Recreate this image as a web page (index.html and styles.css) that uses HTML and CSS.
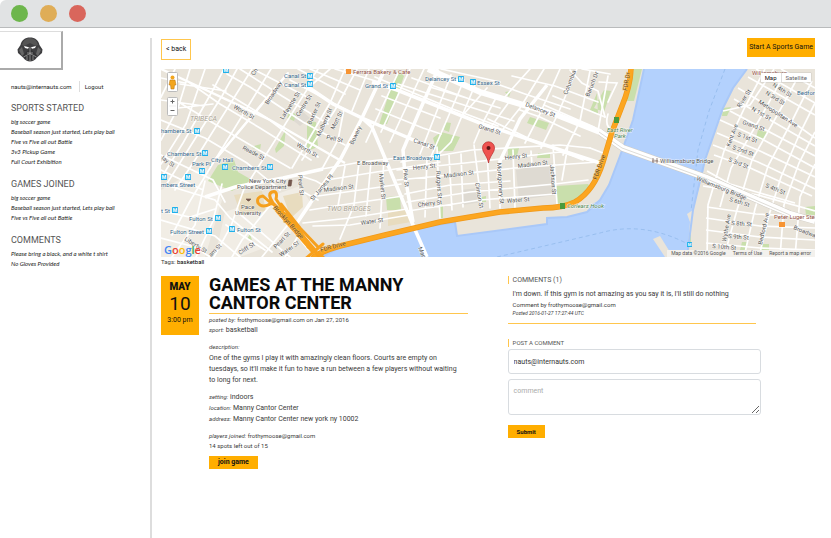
FILE: index.html
```html
<!DOCTYPE html>
<html lang="en">
<head>
<meta charset="utf-8">
<title>Games at the Manny Cantor Center</title>
<link rel="stylesheet" href="styles.css">
</head>
<body>
<header class="chrome"><span class="dot green"></span><span class="dot amber"></span><span class="dot red"></span></header>
<div class="shell">
  <aside class="sidebar">
    <a class="logo" href="#" aria-label="Home">
      <svg viewBox="0 0 28 28" width="28" height="28">
        <path d="M14 1.500C19 1.500 22.500 4 23.500 9L26.500 13.500L26 17L21 21.500Q18 25.500 14 25.500Q10 25.500 7 21.500L2 17L1.500 13.500L4.500 9C5.500 4 9 1.500 14 1.500Z" fill="#3e3e40"/>
        <path d="M14 2Q7 3 6 9L8 10L14 7L20 10L22 9Q21 3 14 2Z" fill="#555"/>
        <path d="M3 14L6 11L8 18L6 20ZM25 14L22 11L20 18L22 20Z" fill="#666"/>
        <path d="M8 10L13 11.200L12 12.800L9 12ZM20 10L15 11.200L16 12.800L19 12Z" fill="#fff"/>
        <path d="M14 13L10 16L7 20L11 24H17L21 20L18 16Z" fill="#333335"/>
        <path d="M14 11V25.500M11 17H17M7.500 21L14 17.500L20.500 21M11 20V24M17 20V24" fill="none" stroke="#aaa" stroke-width=".7"/>
      </svg>
    </a>
    <div class="account"><span class="email">nauts@internauts.com</span><a href="#">Logout</a></div>
    <section class="group"><h2>SPORTS STARTED</h2>
      <ul><li>big soccer game</li><li>Baseball season just started, Lets play ball</li><li>Five vs Five all out Battle</li><li>3v3 Pickup Game</li><li>Full Court Exhibition</li></ul></section>
    <section class="group"><h2>GAMES JOINED</h2>
      <ul><li>big soccer game</li><li>Baseball season just started, Lets play ball</li><li>Five vs Five all out Battle</li></ul></section>
    <section class="group"><h2>COMMENTS</h2>
      <ul><li>Please bring a black, and a white t shirt</li><li>No Gloves Provided</li></ul></section>
  </aside>
  <main class="main">
    <nav class="toolbar"><a class="back" href="#">&lt; back</a><button class="start" type="button">Start A Sports Game</button></nav>
    <div class="map">
      <svg class="map-art" viewBox="161 69 654 188" preserveAspectRatio="xMidYMid slice">
        <defs>
          <symbol id="metro" viewBox="0 0 6 6"><rect width="6" height="6" rx=".6" fill="#1fb0ea"/><text x="3" y="4.900" text-anchor="middle" class="metro-m">M</text></symbol>
        </defs>
        <rect x="161" y="69" width="654" height="188" fill="#e9e4da"/>
        <g fill="#f1ede5">
          <path d="M161 190L205 165L222 200L205 257H161ZM225 212L300 186L312 205L285 240L240 257H215Z"/>
        </g>
        <g fill="#dedad2">
          <path d="M516 170L553 163L555 195L519 200ZM290 118L302 111L310 118L300 126ZM461 190L478 188L482 202L462 205Z"/>
        </g>
        <g fill="#e8dcbf"><path d="M283 196L302 192L303 207L291 218ZM234 195L262 191L266 211L241 215ZM388 211L408 208L411 222L388 226Z"/></g>
        <g fill="#c9dfac">
          <path d="M208 181L218 165L234 160L238 172L252 180L232 191ZM275 149L286 129L284 146L276 153ZM307 121L316 122L318 147L307 151ZM289 112L296 114L294 121L287 118ZM254 146L261 144L260 150L252 148Z"/>
          <path d="M392 84L400 72L404 76L387 124L379 125ZM441 132L460 137L453 151H437L433 138ZM445 122L451 123L449 132L444 130ZM530 117L549 123L546 130L527 123ZM508 148L519 148L517 156L508 156ZM538 153L550 153L550 158H537ZM505 92L511 91L509 97Z"/>
          <path d="M556 186L588 184L591 188L579 202L557 204ZM604 90L611 91L604 112L594 108ZM597 93L590 110L598 114ZM634 69H642L634 101H627ZM723 108L731 107L727 116H722ZM758 130L767 132L764 141L756 138ZM386 197L400 196L401 210H387ZM481 197L486 196V202H481ZM439 205L443 205V218H440ZM250 234L252 240L247 239ZM805 207L815 206V215H806ZM742 242L747 242L745 250H740ZM762 244H769V253H760ZM691 231V245H688Z"/>
        </g>
        <g fill="none" stroke="#fff" stroke-width="1.700" stroke-linecap="round">
          <path d="M175 69L161 97M190 69L178 108L161 140M205 69L186 124L161 164M224 69L214 88L183 143L161 178M237 69L222 96L188 150L166 185M252 69L195 160L175 190M271 69L215 160L190 201L172 235M330 69L308 88L250 180M345 69L330 103L292 168M357 69L335 110L302 160M369 69L352 111M318 69L305 88M288 73L215 160"/>
          <path d="M161 78L185 83M161 100L204 106M180 84L226 91M178 108L213 104M161 120L205 138L247 163L280 190M172 98L208 120L252 146L290 168M190 83L220 104L260 128L311 160M213 85L267 118L318 157M227 74L250 87L303 122L345 145M240 69L282 96L328 124M253 69L280 83L307 97M290 80L335 104L361 118M298 69L345 94M310 69L360 90M335 69L379 82"/>
          <path d="M161 155L213 180L225 202M161 170L203 190M161 211L190 217L215 209M166 185L215 200L230 218L272 252M161 220L215 236L240 257M161 238L195 247L210 257M205 181L195 225L172 257M222 184L213 221L196 257M245 186L231 226L214 257M272 203L242 240L232 257M290 222L262 257M281 218L302 230L285 257M241 215L290 257M226 225L265 250"/>
          <path d="M344 109L338 140L322 169M322 169L361 162L398 158M327 180L370 173L440 162M318 196L360 190L401 184M310 210L348 204L403 196M303 223L350 218L407 209M345 166L338 206M359 162L354 205L340 239M371 162L366 216M384 158L380 228M313 226L350 225L409 215M298 175L316 181L328 188M300 190L318 200"/>
          <path d="M398 73L366 142M410 69L381 132M424 69L390 142M451 75L420 154M464 80L430 159M475 85L451 142L438 155M487 88L462 116M497 96L482 124L474 143M509 102L490 128M544 69L520 108L500 133M560 69L539 116L525 143M577 69L557 116L541 148M590 71L580 121L563 155M530 69L504 98M608 76L598 131M520 110L540 117L580 136M488 119L530 139L583 160"/>
          <path d="M375 77L450 108L498 126M382 96L440 118M376 109L423 128L441 134M398 84L467 106L514 121M412 78L475 101M430 87L500 108M494 83L525 94L570 109M512 76L555 86L598 102M441 69L500 82M544 105L594 127M553 96L605 117"/>
          <path d="M401 162L472 150L560 145L590 148M397 170L465 163L560 152L595 162M397 180L440 176L515 168L598 162M405 194L450 185L510 181M407 202L470 192L555 184L588 180M408 211L480 200L555 194M437 147L440 218M427 158L425 217M449 155L452 210M461 154L463 207M474 145L482 208M487 151L490 208M513 150L515 208M531 151L532 165M553 145L557 204M568 145L562 180M500 160V208"/>
          <path d="M570 70L582 83L598 91L605 117M582 69L610 74M599 82L617 83L608 102M608 114Q604 127 613 130M590 148L603 153"/>
        </g>
        <path d="M644 69L638 97L633 120L620 156L609 185L600 200L592 204L587 212L567 217L547 218V224L457 236L455 222L413 229L370 240L342 246L322 257H653L665 257L653 239L660 236L673 257H687L690 222L687 214L693 210L703 173L705 160L715 130L723 108L733 88L747 69Z" fill="#b3d1fd"/>
        <path d="M644 69L638 97L633 120L620 156L609 185L600 200L587 212L567 217L547 218V224L457 236L455 222L413 229L370 240L342 246L322 257M747 69L733 88L723 108L705 160L693 210L687 257" fill="none" stroke="#a9c8f8" stroke-width="2"/>
        <path d="M725 69L709 111L698 150L691 211M497 257L600 233Q642 221 686 243" fill="none" stroke="#8db6e8" stroke-dasharray="4 3" stroke-width=".7"/>
        <g fill="none" stroke="#fff" stroke-width="1.700">
          <path d="M774 69L750 105L723 111M765 69L745 107L724 151L708 205L707 257M785 73L762 115L731 168L720 207M798 77L779 112L752 160L737 210L724 257M812 81L793 119L768 166L755 209L744 257M815 103L800 133L781 177L769 215L759 257M815 132L799 163L784 205L780 257M815 164L800 197L795 257"/>
          <path d="M748 77L815 115M756 69L815 103M781 69L815 88M738 88L783 115L815 138M734 99L815 146M730 111L815 156M720 120L762 139L815 168M717 133L760 151L815 177M713 145L758 162L815 189M714 155L748 167L812 196M707 171L730 184L760 193L795 203M703 186L758 195L815 211M707 207L756 214L815 217M706 218L760 226L815 228M706 230L760 237L815 240M706 243L760 248L815 250"/>
        </g>
        <path d="M600 132L623 148L707 178L790 214L815 221" fill="none" stroke="#d0ccc4" stroke-width="7"/>
        <g fill="none" stroke="#fff">
          <path stroke-width="6" d="M428 69L480 92L557 115L600 132L623 148L707 178L790 214L815 221"/>
          <path stroke-width="3.500" d="M372 82L397 90L480 123L545 145L600 163M308 87L333 104L362 118L430 147M385 69L362 118L340 160L311 202L297 223M362 118L372 127L390 170L413 225L427 257M438 69L420 110L403 150L405 176L413 222M547 85L520 119L500 161L498 180M205 197L235 187L283 178L323 169"/>
          <path stroke-width="2.400" d="M161 69L176 76L270 120L345 163M288 73L215 160M271 203L309 250M287 213L320 257"/>
        </g>
        <path d="M599 132L622 148L707 179L790 215" fill="none" stroke="#d6d3cd" stroke-width=".8"/>
        <g fill="none" stroke-linecap="round" stroke-linejoin="round">
          <path d="M631 69Q630 87 622 106L612 132L603 162Q594 191 575 202Q563 208 543 208L500 212L440 222L385 235L340 246Q322 251 314 257" stroke="#f0991a" stroke-width="5.600"/>
          <path d="M631 69Q630 87 622 106L612 132L603 162Q594 191 575 202Q563 208 543 208L500 212L440 222L385 235L340 246Q322 251 314 257" stroke="#fca620" stroke-width="4.200"/>
          <path d="M272 204L263 196Q256 197 258 203Q262 209 272 203L286 215L312 247L319 257M283 210L276 199Q278 190 272 192Q267 194 273 203L285 215M281 204L300 228L318 247" stroke="#f5a01e" stroke-width="3"/>
          <path d="M278 210L313 250" stroke="#f9a11c" stroke-width="6"/>
          <path d="M308 247L323 257M323 244L304 260" stroke="#f9a11c" stroke-width="3"/>
        </g>
        <g fill="#4a9a3c"><rect x="614" y="117" width="5" height="6"/><rect x="560" y="203" width="5" height="6"/></g>
        <g>
          <use href="#metro" x="307" y="73" width="6" height="6"/><use href="#metro" x="307" y="81" width="6" height="6"/><use href="#metro" x="390" y="83" width="6" height="6"/><use href="#metro" x="458" y="76" width="6" height="6"/><use href="#metro" x="470" y="79" width="6" height="6"/><use href="#metro" x="434" y="154" width="6" height="6"/><use href="#metro" x="194" y="128" width="6" height="6"/><use href="#metro" x="202" y="150" width="6" height="6"/><use href="#metro" x="222" y="164" width="6" height="6"/><use href="#metro" x="199" y="168" width="6" height="6"/><use href="#metro" x="267" y="164" width="6" height="6"/><use href="#metro" x="185" y="174" width="6" height="6"/><use href="#metro" x="161" y="174" width="6" height="6"/><use href="#metro" x="172" y="207" width="6" height="6"/><use href="#metro" x="215" y="215" width="6" height="6"/><use href="#metro" x="206" y="228" width="6" height="6"/><use href="#metro" x="229" y="226" width="6" height="6"/><use href="#metro" x="223" y="67" width="6" height="6"/><use href="#metro" x="687" y="242" width="5" height="5"/>
        </g>
        <g class="road">
          <text transform="translate(233 108) rotate(30)">Worth St</text><text transform="translate(296 146) rotate(30)">Worth St</text><text transform="translate(268 105) rotate(-57)">Broadway</text><text transform="translate(283 120) rotate(-57)">Lafayette St</text><text transform="translate(299 117) rotate(-58)">Centre St</text><text transform="translate(311 125) rotate(-66)">Baxter St</text><text transform="translate(320 137) rotate(-66)">Mulberry St</text><text transform="translate(334 130) rotate(-63)">Mott St</text><text transform="translate(326 139) rotate(12)">Pell St</text><text transform="translate(353 145) rotate(-64)">Bowery</text><text transform="translate(242 149) rotate(28)">Reade St</text><text transform="translate(254 76) rotate(-55)">Ch</text>
          <text transform="translate(313 201) rotate(-50)">St James Pl</text><text transform="translate(298 175) rotate(85)">Pearl St</text><text transform="translate(324 192) rotate(-7)">Madison St</text><text x="357" y="165">E Broadway</text><text transform="translate(379 174) rotate(84)">Market St</text><text transform="translate(403 169) rotate(84)">Pike St</text><text transform="translate(361 225) rotate(-8)">Water St</text><text transform="translate(276 249) rotate(-46)">Pearl St</text><text transform="translate(281 257) rotate(-35)">Water St</text><text transform="translate(184 240) rotate(32)">Liberty St</text><text transform="translate(240 255) rotate(-33)">Cliff St</text><text transform="translate(211 257) rotate(-45)">am St</text><text transform="translate(161 159) rotate(35)">lay St</text>
          <text transform="translate(413 142) rotate(20)">Canal St</text><text transform="translate(478 128) rotate(17)">Grand St</text><text transform="translate(525 106) rotate(21)">Delancey St</text><text transform="translate(413 170) rotate(-6)">Henry St</text><text transform="translate(505 160) rotate(-7)">Henry St</text><text transform="translate(444 178) rotate(-7)">Madison St</text><text transform="translate(518 168) rotate(-7)">Madison St</text><text transform="translate(418 207) rotate(-7)">Cherry St</text><text transform="translate(507 203) rotate(-5)">Water St</text><text transform="translate(436 171) rotate(86)">Rutgers St</text><text transform="translate(475 183) rotate(80)">Clinton St</text><text transform="translate(497 163) rotate(86)">Montgomery St</text><text transform="translate(550 165) rotate(86)">Jackson St</text><text transform="translate(567 95) rotate(-69)">Columbia</text><text transform="translate(589 97) rotate(-68)">Baruch Dr</text><text transform="translate(418 248) rotate(67)">Manhattan</text>
          <text transform="translate(740 108) rotate(-56)">River St</text><text transform="translate(730 147) rotate(-70)">Kent Ave</text><text transform="translate(772 86) rotate(32)">N 4th St</text><text transform="translate(765 94) rotate(32)">N 3rd St</text><text transform="translate(751 110) rotate(30)">N 1st St</text><text transform="translate(758 103) rotate(33)">Metropolitan Ave</text><text transform="translate(742 124) rotate(18)">Grand St</text><text transform="translate(737 136) rotate(20)">S 1st St</text><text transform="translate(732 149) rotate(19)">S 2nd St</text><text transform="translate(728 161) rotate(22)">S 3rd St</text><text transform="translate(765 187) rotate(22)">S 4th St</text><text transform="translate(729 201) rotate(17)">S 6th St</text><text transform="translate(731 225) rotate(4)">S 8th St</text><text transform="translate(728 238) rotate(5)">S 9th St</text><text transform="translate(712 248) rotate(5)">S 10th St</text><text transform="translate(726 242) rotate(-80)">Wythe Ave</text><text transform="translate(762 245) rotate(-77)">Bedford Ave</text><text transform="translate(793 229) rotate(22)">Broadway</text><text transform="translate(696 180) rotate(22)">Williamsburg Bridge</text>
        </g>
        <g class="highway"><text transform="translate(273 208) rotate(48)">Brooklyn Bridge</text><text transform="translate(321 252) rotate(-15)">FDR Drive</text><text transform="translate(627 91) rotate(-80)">FDR Dr</text><text transform="translate(597 180) rotate(-71)">FDR Drive</text></g>
        <g class="area"><text x="190" y="121">TRIBECA</text><text x="327" y="211">TWO BRIDGES</text></g>
        <g class="station"><text x="284" y="78">Canal St</text><text x="284" y="87">Canal St</text><text x="365" y="88">Grand St</text><text x="425" y="81">Delancey St</text><text x="477" y="85">Essex St</text><text x="393" y="160">East Broadway</text><text x="161" y="133">hambers St</text><text x="167" y="156">Chambers St</text><text x="211" y="162">City Hall</text><text x="192" y="166">Park Pl</text><text x="232" y="170">Chambers St</text><text x="161" y="187">mbers Street</text><text x="161" y="213">t St</text><text x="189" y="221">Fulton St</text><text x="170" y="234">Fulton Street</text><text x="237" y="232">Fulton St</text><text x="797" y="95">Bedford</text></g>
        <g class="place"><text x="249" y="183">New York City</text><text x="237" y="189">Police Department</text><text x="241" y="209">Pace</text><text x="235" y="215">University</text><text x="660" y="163">Williamsburg Bridge</text></g>
        <path d="M653 158V163M657 158V163M652 161H658M246 199H251L249 201H248ZM289 180H292L291 186H288Z" fill="#74584e" stroke="#74584e" stroke-width=".7"/>
        <g class="food"><text x="353" y="74">Ferrara Bakery &amp; Cafe</text><text x="752" y="75">Williamsburg</text><text x="774" y="219">Peter Luger Steak</text></g>
        <g fill="#f79433"><path d="M346 69H351V74H346ZM779 222H785V227H779Z"/></g>
        <g class="parkname"><text x="607" y="132">East River</text><text x="614" y="138">Park</text><text x="567" y="208">Corlears Hook</text></g>
        <g class="watername"><text x="531" y="261">East River</text></g>
        <g><path d="M488.500 163C487 155 482.500 153 482.500 147.800A6 6 0 0 1 494.500 147.800C494.500 153 490 155 488.500 163Z" fill="#ef5350" stroke="#b52b2a" stroke-width=".7"/><circle cx="488.500" cy="148" r="2" fill="#5b1514"/></g>
        <g><rect x="167.500" y="72.500" width="10" height="19" rx="1" fill="#fff" stroke="#bbb"/><circle cx="172.500" cy="77.500" r="2" fill="#f2a51d"/><path d="M170 80H175L176 85H174.500L174 89H171L170.500 85H169Z" fill="#f2a51d" stroke="#b97411" stroke-width=".5"/>
        <rect x="167.500" y="97.500" width="10" height="18" rx="1" fill="#fff" stroke="#bbb"/><path d="M170.500 101.500H174.500M172.500 99.500V103.500M170.500 110.500H174.500" stroke="#666" stroke-width="1"/><path d="M169 106H176" stroke="#ddd" stroke-width=".5"/></g>
        <text x="164" y="254" class="google"><tspan fill="#4285f4">G</tspan><tspan fill="#ea4335">o</tspan><tspan fill="#fbbc05">o</tspan><tspan fill="#4285f4">g</tspan><tspan fill="#34a853">l</tspan><tspan fill="#ea4335">e</tspan></text>
      </svg>
      <div class="map-type"><button type="button" class="on">Map</button><button type="button">Satellite</button></div>
      <div class="credits"><span>Map data ©2016 Google</span><a href="#">Terms of Use</a><a href="#">Report a map error</a></div>
    </div>
    <p class="tags">Tags: <b>basketball</b></p>
    <div class="content">
      <article class="event">
        <time class="date"><strong>MAY</strong><span class="day">10</span><span>3:00 pm</span></time>
        <div class="details">
          <h1>GAMES AT THE MANNY CANTOR CENTER</h1>
          <p class="small"><em>posted by:</em> frothymoose@gmail.com on Jan 27, 2016</p>
          <p><em>sport:</em> basketball</p>
          <div class="block"><p><em>description:</em></p><p>One of the gyms I play it with amazingly clean floors. Courts are empty on tuesdays, so it'll make it fun to have a run between a few players without waiting to long for next.</p></div>
          <div class="block"><p><em>setting:</em> indoors</p><p><em>location:</em> Manny Cantor Center</p><p><em>address:</em> Manny Cantor Center new york ny 10002</p></div>
          <div class="players"><p><em>players joined:</em> frothymoose@gmail.com</p><p>14 spots left out of 15</p></div>
          <button class="join" type="button">join game</button>
        </div>
      </article>
      <section class="comments">
        <h2>COMMENTS (1)</h2>
        <div class="comment"><p class="quote">I'm down. If this gym is not amazing as you say it is, I'll still do nothing</p><p class="by">Comment by frothymoose@gmail.com</p><p class="when">Posted 2016-01-27 17:27:44 UTC</p></div>
        <form>
          <h3>POST A COMMENT</h3>
          <input type="text" aria-label="Email" value="nauts@internauts.com">
          <textarea aria-label="Comment" placeholder="comment"></textarea>
          <button type="button" class="submit">Submit</button>
        </form>
      </section>
    </div>
  </main>
</div>
</body>
</html>
```
FILE: styles.css
```css
* { box-sizing: border-box; }
body { margin: 0; background: #fff; color: #3a3a3a; font: 7px/11px Roboto, "Open Sans", sans-serif; }
h1, h2, h3, p, ul { margin: 0; padding: 0; font-weight: 400; }
ul { list-style: none; }
a { color: inherit; text-decoration: none; }
button { border: 0; border-radius: 0; padding: 0; background: #ffae00; color: #111; font: inherit; }
.chrome { display: flex; align-items: center; gap: 12px; height: 28px; padding-left: 11px; background: #e1e3e4; border-bottom: 1px solid #b9bbbc; border-top-left-radius: 6px; }
.dot { width: 17px; height: 17px; border-radius: 50%; }
.green { background: #6db64c; }
.amber { background: #dfad57; }
.red { background: #d9665c; }
.shell { display: flex; min-height: calc(100vh - 28px); }
.sidebar { flex: 0 0 150px; padding-top: 3px; font-size: 6px; }
.logo { display: flex; width: 63px; height: 39px; padding-left: 16px; align-items: center; border: solid #aaa; border-width: 1px 2px 2px 0; border-top-color: #ddd; }
.account { display: flex; align-items: center; height: 10px; margin: 11px 0 8px 11px; color: #222; }
.email { padding-right: 7px; margin-right: 5px; border-right: 1px solid #ddd; }
.group { padding: 0 0 8px 11px; }
.group h2 { font-size: 9px; line-height: 18px; color: #555; }
.group li { font-family: Lato, sans-serif; font-style: italic; line-height: 10px; color: #222; white-space: nowrap; }
.main { flex: 1; min-width: 0; margin-top: 10px; padding: 0 16px 0 9px; border-left: 2px solid #ddd; }
.toolbar { display: flex; justify-content: space-between; align-items: flex-start; height: 31px; }
.back { margin-top: 1px; padding: 4px; border: 1px solid #ffc64d; color: #111; }
.start { padding: 4px 2px; line-height: 11px; }
.map { position: relative; height: 188px; overflow: hidden; }
.map-art { display: block; width: 100%; height: 100%; }
.map text { font-family: Roboto, sans-serif; font-size: 6px; fill: #555; stroke: #fff; stroke-width: 1px; paint-order: stroke; stroke-opacity: .7; }
.map .station text { fill: #35688b; }
.map .food text { fill: #935044; }
.map .area text { font-size: 7px; font-style: italic; fill: #a7a08f; }
.map .highway text { fill: #60461c; stroke: #ffc266; }
.map .parkname text { font-style: italic; fill: #4b8550; }
.map .watername text { font-style: italic; fill: #4c79ad; stroke: none; }
.map .metro-m { font-size: 5px; font-weight: 700; fill: #fff; stroke: none; }
.map .google { font-family: "Open Sans", sans-serif; font-size: 11px; font-weight: 600; stroke: none; }
.map .google tspan { stroke: none; }
.map-type { position: absolute; top: 4px; right: 4px; display: flex; background: #fff; box-shadow: 0 0 1px #999; }
.map-type button { padding: 0 4px; background: #fff; color: #666; font-size: 6px; line-height: 9px; }
.map-type .on { color: #111; border-right: 1px solid #ddd; }
.credits { position: absolute; right: 0; bottom: 0; display: flex; gap: 7px; padding: 0 4px; background: #f3f1ed; color: #555; font-size: 5px; line-height: 7px; }
.tags { font-size: 6px; line-height: 10px; }
.tags b { font-weight: 400; color: #000; }
.content { display: grid; grid-template-columns: 47% 39%; column-gap: 6%; margin-top: 9px; }
.event { display: grid; grid-template-columns: 38px 1fr; gap: 10px; align-items: start; }
.date { display: flex; flex-direction: column; align-items: center; height: 59px; padding-top: 5px; background: #ffae00; color: #111; }
.date strong { font-size: 10px; font-weight: 900; line-height: 12px; }
.day { font-size: 19px; line-height: 22px; }
h1 { border-bottom: 1px solid #ffc64d; padding-bottom: 1px; font-size: 18px; font-weight: 700; line-height: 18px; color: #0a0a0a; }
em { font-size: 6px; line-height: 1; }
.small, .players { font-size: 6px; }
.block { margin-top: 6px; padding-right: 4px; }
.players { margin-top: 6px; line-height: 10px; }
.join { margin-top: 5px; padding: 0 9px; font-weight: 700; line-height: 13px; }
.comments h2, .comments h3 { padding-left: 4px; border-left: 1px solid #ffc64d; font-size: 7px; color: #555; line-height: 8px; }
.comments h3 { font-size: 6px; }
.comment { margin: 5px 7px 0 0; padding: 0 5px 5px; border-bottom: 1px solid #ffc64d; line-height: 9px; }
.quote { line-height: 11px; }
.by { font-size: 6px; }
.when { font-size: 5px; font-style: italic; }
form { display: flex; flex-direction: column; align-items: flex-start; margin-top: 15px; padding-right: 2px; }
input, textarea { width: 100%; border: 1px solid #d8dce0; border-radius: 3px; padding: 6px 5px; font: inherit; color: #333; }
input { height: 25px; margin: 2px 0 5px; }
textarea { height: 36px; resize: vertical; }
textarea::placeholder { color: #aaa; }
.submit { margin-top: 10px; padding: 0 9px; font-weight: 700; font-size: 6px; line-height: 13px; }
```
